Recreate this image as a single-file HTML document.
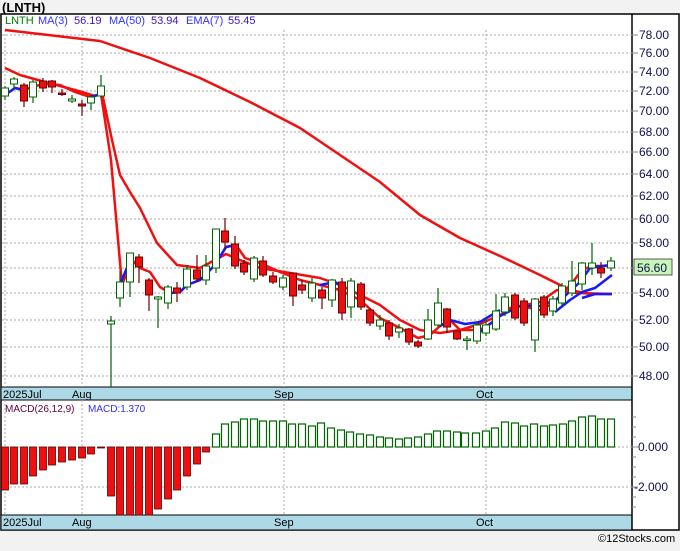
<!DOCTYPE html>
<html><head><meta charset="utf-8">
<style>
html,body{margin:0;padding:0;background:#f2f2f2;}
body{width:680px;height:546px;overflow:hidden;font-family:"Liberation Sans",sans-serif;}
svg text{font-family:"Liberation Sans",sans-serif;}
</style></head><body>
<svg id="s" width="680" height="546" xmlns="http://www.w3.org/2000/svg">
<rect x="0" y="0" width="680" height="546" fill="#f2f2f2"/>
<text x="2" y="12" font-size="13" font-weight="bold" fill="#000">(LNTH)</text>
<rect x="1" y="14" width="678" height="516" fill="#fff" stroke="#000" stroke-width="1.5"/>
<rect x="1" y="387" width="631" height="13" fill="#add8e6" stroke="#000" stroke-width="1"/>
<rect x="1" y="515" width="631" height="15" fill="#add8e6" stroke="#000" stroke-width="1"/>
<line x1="632" y1="14" x2="632" y2="530" stroke="#000" stroke-width="1.5"/>
<g id="grid"></g>
<g id="lines"></g>
<g id="cand"></g>
<g id="macd"></g>
<g font-size="11" fill="#000">
<text x="3" y="398">2025Jul</text><text x="72" y="398">Aug</text><text x="274" y="398">Sep</text><text x="476" y="398">Oct</text>
<text x="3" y="526">2025Jul</text><text x="72" y="526">Aug</text><text x="274" y="526">Sep</text><text x="476" y="526">Oct</text>
</g>
<g font-size="11">
<text x="5" y="24" fill="#008000">LNTH</text>
<text x="38" y="24" fill="#3030ff">MA(3)</text><text x="74" y="24" fill="#4010c0">56.19</text>
<text x="109" y="24" fill="#3030ff">MA(50)</text><text x="151" y="24" fill="#4010c0">53.94</text>
<text x="186" y="24" fill="#3030ff">EMA(7)</text><text x="228" y="24" fill="#4010c0">55.45</text>
<text x="5" y="412" fill="#600040" font-size="10">MACD(26,12,9)</text>
<text x="88" y="412" fill="#3030ff" font-size="10">MACD:1.370</text>
</g>
<g id="axis" font-size="12" fill="#101050"></g>
<rect x="634" y="259" width="38" height="16" fill="#c8f5b8" stroke="#333" stroke-width="0.8"/>
<text x="637" y="272" font-size="12" fill="#101050">56.60</text>
<text x="598" y="542" font-size="11" fill="#000">©12Stocks.com</text>
</svg>
<script>
var NS='http://www.w3.org/2000/svg';
function el(g,t,a){var e=document.createElementNS(NS,t);for(var k in a)e.setAttribute(k,a[k]);document.getElementById(g).appendChild(e);return e;}
function Y(p){return 3093.6-702*Math.log(p);}
for(var p=48;p<=78;p+=2){var y=Math.round(Y(p));
 el('grid','line',{x1:2,y1:y,x2:632,y2:y,stroke:'#aaa','stroke-dasharray':'2,2','stroke-width':1});
 el('axis','line',{x1:632,y1:y,x2:638,y2:y,stroke:'#888'});
 if(p!=56){var t=el('axis','text',{x:639,y:y+4});t.textContent=p.toFixed(2);}}
[5,82,284,486].forEach(function(x){el('grid','line',{x1:x,y1:30,x2:x,y2:387,stroke:'#aaa','stroke-dasharray':'2,2'});el('grid','line',{x1:x,y1:400,x2:x,y2:515,stroke:'#aaa','stroke-dasharray':'2,2'});});
[447,487].forEach(function(y){el('grid','line',{x1:2,y1:y,x2:632,y2:y,stroke:'#aaa','stroke-dasharray':'2,2'});el('axis','line',{x1:632,y1:y,x2:638,y2:y,stroke:'#888'});});
[417,427,437,457,467,477,497,507].forEach(function(y){el('axis','line',{x1:632,y1:y,x2:636,y2:y,stroke:'#888'});});
var t=el('axis','text',{x:638,y:451});t.textContent='0.000';
t=el('axis','text',{x:634,y:491});t.textContent='-2.000';
function pl(pts,c,w){el('lines','polyline',{points:pts,fill:'none',stroke:c,'stroke-width':w,'stroke-linejoin':'round'});}
pl('5,30 100,41 150,58 200,78 250,102 300,128 340,155 380,182 420,215 460,238 500,256 540,275 570,290 590,294 612,294','#f01010',2.5);
pl('5,68 20,75 45,82 75,90 95,96 102,93 112,140 120,175 130,192 140,208 157,243 177,265 200,268 226,254 240,260 260,268 290,273 320,278 340,285 360,295 380,305 400,320 420,330 440,333 460,330 480,324 500,315 520,306 540,302 557,290 577,293 612,294','#f01010',2.5);
pl('5,95 15,88 24,90 35,86 45,84 60,85 75,92 90,97 101,94 111,160 122,285 132,260 140,268 150,272 160,287 170,293 180,292 187,285 200,280 215,265 226,247 236,245 245,258 260,263 280,272 300,280 320,285 340,290 360,300 380,318 400,328 418,338 430,335 440,326 450,320 460,330 480,330 490,324 500,316 510,308 520,306 540,310 550,305 560,296 572,283 582,270 592,266 602,266 612,265','#f01010',2.5);
pl('5,95 15,88 24,90','#1818ff',2.5);pl('91,97 101,94','#1818ff',2.5);pl('120,285 130,260','#1818ff',2.5);
pl('170,293 180,292 187,285 200,280 215,265 226,247 236,245','#1818ff',2.5);pl('320,285 335,282 345,288','#1818ff',2.5);
pl('440,326 450,320 465,324 480,322 490,316 500,310','#1818ff',2.5);
pl('480,332 500,316 520,306 540,306 555,300 565,296 580,282 590,268 602,266 612,265','#1818ff',2.5);
pl('555,312 570,300 582,292 595,288 612,275','#1818ff',2.5);
pl('582,298 595,294 612,294','#1818ff',2.5);
var C=[[5,88,96,86,100,'g'],[14,79,84,77,90,'g'],[24,85,101,83,107,'r'],[33,82,97,80,103,'g'],[43,81,88,78,92,'r'],[52,81,87,80,93,'r'],[62,93,94,89,96,'d'],[72,99,101,95,103,'g'],[82,104,106,100,116,'d'],[91,97,103,95,110,'g'],[101,86,96,75,98,'g'],
[111,321,324,316,387,'g'],[120,282,298,271,307,'g'],[130,253,282,253,297,'g'],[139,257,267,254,283,'r'],[149,280,295,278,311,'r'],[158,297,299,296,328,'g'],[168,287,303,285,309,'g'],[177,288,293,282,302,'r'],[187,269,287,265,290,'g'],[197,270,279,255,282,'r'],[206,266,280,255,285,'g'],[216,229,268,229,273,'g'],[225,231,242,218,249,'r'],[235,244,266,236,269,'r'],[244,263,272,260,275,'r'],[254,258,279,256,282,'g'],[263,261,275,256,277,'r'],[273,276,282,272,284,'r'],[283,278,287,275,290,'g'],
[293,273,296,273,306,'r'],[302,285,290,280,294,'r'],[312,283,298,278,302,'g'],[322,290,298,287,309,'r'],[332,280,300,279,307,'g'],[342,282,313,278,320,'r'],[351,281,307,278,318,'g'],[361,284,307,282,310,'r'],[370,310,323,308,326,'r'],[380,320,326,315,330,'g'],[389,323,336,320,340,'r'],[399,328,332,324,338,'g'],[409,329,342,328,345,'r'],[418,342,346,340,348,'r'],[428,320,339,309,340,'g'],[438,303,325,288,327,'g'],[447,309,327,308,333,'r'],[457,331,339,330,340,'r'],[467,339,340,336,350,'g'],[477,325,341,322,344,'g'],[486,325,333,318,336,'g'],[496,311,329,294,331,'g'],[505,297,312,293,316,'g'],[515,295,318,293,320,'r'],[524,301,323,298,326,'r'],[535,299,340,298,352,'g'],[544,297,315,295,318,'r'],[553,299,311,296,316,'g'],[562,286,303,283,306,'g'],[572,281,293,261,296,'g'],[582,263,284,262,290,'g'],[592,263,268,243,275,'g'],[601,268,273,262,278,'r'],[611,261,268,257,271,'g']];
C.forEach(function(c){var col=c[5]=='g'?'#006400':'#700000';
 el('cand','line',{x1:c[0],y1:c[3],x2:c[0],y2:c[4],stroke:col,'stroke-width':1.2});
 var h=Math.max(c[2]-c[1],1.5);
 el('cand','rect',{x:c[0]-3.5,y:c[1],width:7,height:h,fill:c[5]=='g'?'#fff':'#e81010',stroke:col,'stroke-width':1});});
var M=[[5,490],[14,484],[24,484],[33,476],[43,470],[52,465],[62,462],[72,460],[82,458],[91,454],[101,448],[111,496],[120,515],[130,515],[139,515],[149,515],[158,509],[168,499],[177,490],[187,476],[197,464],[206,452],
[216,434],[225,424],[235,422],[244,419],[254,419],[263,421],[273,421],[283,421],[292,424],[302,424],[312,426],[321,423],[331,428],[341,430],[350,432],[360,434],[370,435],[380,437],[389,438],[399,439],[408,438],[418,437],[428,434],[437,431],[447,431],[457,432],[465,433],[476,433],[486,431],[495,428],[505,422],[515,423],[524,426],[534,424],[544,426],[553,425],[563,424],[572,421],[582,417],[592,416],[601,419],[611,419]];
M.forEach(function(m){var z=447;
 if(m[1]>z){el('macd','rect',{x:m[0]-3.5,y:z,width:7,height:m[1]-z,fill:'#ee1010',stroke:'#600000','stroke-width':0.8});}
 else{el('macd','rect',{x:m[0]-3.5,y:m[1],width:7,height:z-m[1],fill:'#fff',stroke:'#006400','stroke-width':1.2});}});
</script>
</body></html>
